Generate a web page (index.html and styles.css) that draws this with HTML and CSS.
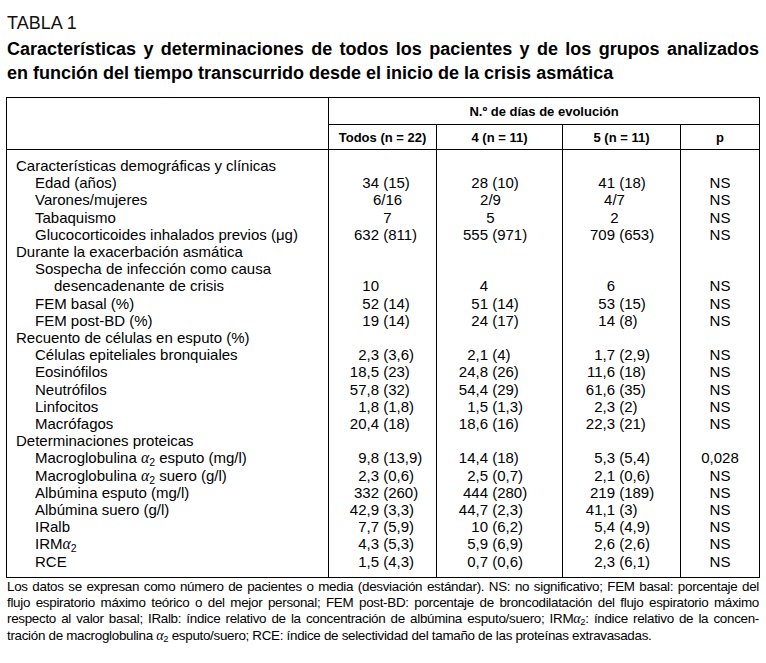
FILE: index.html
```html
<!DOCTYPE html>
<html lang="es">
<head>
<meta charset="utf-8">
<title>Tabla 1</title>
<link rel="stylesheet" href="styles.css">
</head>
<body>
<div class="page">
  <div class="tag">TABLA 1</div>
  <h1 class="title">
    <span class="tline just">Características y determinaciones de todos los pacientes y de los grupos analizados</span>
    <span class="tline">en función del tiempo transcurrido desde el inicio de la crisis asmática</span>
  </h1>
  <table class="data">
    <colgroup>
      <col class="c-label"><col class="c-all"><col class="c-four"><col class="c-five"><col class="c-p">
    </colgroup>
    <thead>
      <tr class="h1">
        <th rowspan="2" class="blank"></th>
        <th colspan="4">N.º de días de evolución</th>
      </tr>
      <tr class="h2">
        <th>Todos (n = 22)</th>
        <th>4 (n = 11)</th>
        <th>5 (n = 11)</th>
        <th>p</th>
      </tr>
    </thead>
    <tbody>
      <tr class="first"><td class="l0">Características demográficas y clínicas</td><td></td><td></td><td></td><td></td></tr>
      <tr><td class="l1">Edad (años)</td><td><span class="n">34</span> (15)</td><td><span class="n">28</span> (10)</td><td><span class="n">41</span> (18)</td><td class="p">NS</td></tr>
      <tr><td class="l1">Varones/mujeres</td><td class="c">6/16</td><td class="c">2/9</td><td class="c">4/7</td><td class="p">NS</td></tr>
      <tr><td class="l1">Tabaquismo</td><td class="c">7</td><td class="c">5</td><td class="c">2</td><td class="p">NS</td></tr>
      <tr><td class="l1">Glucocorticoides inhalados previos (μg)</td><td><span class="n">632</span> (811)</td><td><span class="n">555</span> (971)</td><td><span class="n">709</span> (653)</td><td class="p">NS</td></tr>
      <tr><td class="l0">Durante la exacerbación asmática</td><td></td><td></td><td></td><td></td></tr>
      <tr><td class="l1">Sospecha de infección como causa</td><td></td><td></td><td></td><td></td></tr>
      <tr><td class="l2">desencadenante de crisis</td><td><span class="n">10</span></td><td><span class="n">4</span></td><td><span class="n">6</span></td><td class="p">NS</td></tr>
      <tr><td class="l1">FEM basal (%)</td><td><span class="n">52</span> (14)</td><td><span class="n">51</span> (14)</td><td><span class="n">53</span> (15)</td><td class="p">NS</td></tr>
      <tr><td class="l1">FEM post-BD (%)</td><td><span class="n">19</span> (14)</td><td><span class="n">24</span> (17)</td><td><span class="n">14</span> (8)</td><td class="p">NS</td></tr>
      <tr><td class="l0">Recuento de células en esputo (%)</td><td></td><td></td><td></td><td></td></tr>
      <tr><td class="l1">Células epiteliales bronquiales</td><td><span class="n">2,3</span> (3,6)</td><td><span class="n">2,1</span> (4)</td><td><span class="n">1,7</span> (2,9)</td><td class="p">NS</td></tr>
      <tr><td class="l1">Eosinófilos</td><td><span class="n">18,5</span> (23)</td><td><span class="n">24,8</span> (26)</td><td><span class="n">11,6</span> (18)</td><td class="p">NS</td></tr>
      <tr><td class="l1">Neutrófilos</td><td><span class="n">57,8</span> (32)</td><td><span class="n">54,4</span> (29)</td><td><span class="n">61,6</span> (35)</td><td class="p">NS</td></tr>
      <tr><td class="l1">Linfocitos</td><td><span class="n">1,8</span> (1,8)</td><td><span class="n">1,5</span> (1,3)</td><td><span class="n">2,3</span> (2)</td><td class="p">NS</td></tr>
      <tr><td class="l1">Macrófagos</td><td><span class="n">20,4</span> (18)</td><td><span class="n">18,6</span> (16)</td><td><span class="n">22,3</span> (21)</td><td class="p">NS</td></tr>
      <tr><td class="l0">Determinaciones proteicas</td><td></td><td></td><td></td><td></td></tr>
      <tr><td class="l1">Macroglobulina <i class="gk">α</i><sub>2</sub> esputo (mg/l)</td><td><span class="n">9,8</span> (13,9)</td><td><span class="n">14,4</span> (18)</td><td><span class="n">5,3</span> (5,4)</td><td class="p">0,028</td></tr>
      <tr><td class="l1">Macroglobulina <i class="gk">α</i><sub>2</sub> suero (g/l)</td><td><span class="n">2,3</span> (0,6)</td><td><span class="n">2,5</span> (0,7)</td><td><span class="n">2,1</span> (0,6)</td><td class="p">NS</td></tr>
      <tr><td class="l1">Albúmina esputo (mg/l)</td><td><span class="n">332</span> (260)</td><td><span class="n">444</span> (280)</td><td><span class="n">219</span> (189)</td><td class="p">NS</td></tr>
      <tr><td class="l1">Albúmina suero (g/l)</td><td><span class="n">42,9</span> (3,3)</td><td><span class="n">44,7</span> (2,3)</td><td><span class="n">41,1</span> (3)</td><td class="p">NS</td></tr>
      <tr><td class="l1">IRalb</td><td><span class="n">7,7</span> (5,9)</td><td><span class="n">10</span> (6,2)</td><td><span class="n">5,4</span> (4,9)</td><td class="p">NS</td></tr>
      <tr><td class="l1">IRM<i class="gk">α</i><sub>2</sub></td><td><span class="n">4,3</span> (5,3)</td><td><span class="n">5,9</span> (6,9)</td><td><span class="n">2,6</span> (2,6)</td><td class="p">NS</td></tr>
      <tr class="last"><td class="l1">RCE</td><td><span class="n">1,5</span> (4,3)</td><td><span class="n">0,7</span> (0,6)</td><td><span class="n">2,3</span> (6,1)</td><td class="p">NS</td></tr>
    </tbody>
  </table>
  <div class="notes">
    <div class="nline just">Los datos se expresan como número de pacientes o media (desviación estándar). NS: no significativo; FEM basal: porcentaje del</div>
    <div class="nline just">flujo espiratorio máximo teórico o del mejor personal; FEM post-BD: porcentaje de broncodilatación del flujo espiratorio máximo</div>
    <div class="nline just">respecto al valor basal; IRalb: índice relativo de la concentración de albúmina esputo/suero; IRM<i class="gk">α</i><sub>2</sub>: índice relativo de la concen-</div>
    <div class="nline">tración de macroglobulina <i class="gk">α</i><sub>2</sub> esputo/suero; RCE: índice de selectividad del tamaño de las proteínas extravasadas.</div>
  </div>
</div>
</body>
</html>
```

FILE: styles.css
```css
html, body {
  margin: 0;
  padding: 0;
  background: #ffffff;
  color: #000000;
}

body {
  font-family: "Liberation Sans", Arial, sans-serif;
}

.page {
  width: 753px;
  padding: 12px 0 0 6px;
}

.tag {
  font-size: 18px;
  line-height: 22px;
  padding-left: 1px;
  font-weight: normal;
  color: #111;
}

.title {
  margin: 3px 0 0 0;
  padding-left: 1px;
  font-size: 18px;
  line-height: 24px;
  font-weight: bold;
}

.tline {
  display: block;
  white-space: nowrap;
}

.just {
  text-align: justify;
  text-align-last: justify;
}

.data {
  margin-top: 12px;
  width: 753px;
  table-layout: fixed;
  border-collapse: collapse;
  border: 1px solid #000;
  font-size: 15px;
}

.c-label { width: 322px; }
.c-all { width: 108px; }
.c-four { width: 126px; }
.c-five { width: 118px; }
.c-p { width: 79px; }

.data th {
  font-size: 13px;
  font-weight: bold;
  padding: 0;
  text-align: center;
  border: 1px solid #000;
}

.data th.blank {
  border-top: 0;
  border-bottom: 1px solid #000;
}

.h1 th { height: 26px; }
.h2 th { height: 24px; }

.data td {
  padding: 0;
  line-height: 17.2px;
  height: 17.2px;
  white-space: nowrap;
  border-left: 1px solid #000;
  border-right: 1px solid #000;
  vertical-align: top;
}

.data tbody td:nth-child(2) { padding-left: 10px; }
.data tbody td:nth-child(3) { padding-left: 11px; }
.data tbody td:nth-child(4) { padding-left: 12px; }

.data tr.first td { padding-top: 7px; }
.data tr.last td { padding-bottom: 7px; }

.l0 { padding-left: 9px !important; }
.l1 { padding-left: 28px !important; }
.l2 { padding-left: 47px !important; }

.n {
  display: inline-block;
  width: 40px;
  text-align: right;
}

.data td.c {
  text-align: center;
  padding-left: 0;
}
.data tbody td.c:nth-child(3) { padding-left: 0; padding-right: 18px; }
.data tbody td.c:nth-child(4) { padding-left: 0; padding-right: 14px; }

.data td.p {
  text-align: center;
}

.gk {
  font-family: "Liberation Serif", "DejaVu Serif", serif;
  font-style: italic;
  line-height: 0;
  font-size: 1.05em;
}

sub {
  font-size: 0.7em;
  line-height: 0;
  vertical-align: -0.25em;
}

.notes {
  margin-top: 1px;
  padding-left: 1px;
  font-size: 13.4px;
  line-height: 16.3px;
  letter-spacing: -0.3px;
}

.nline {
  white-space: nowrap;
}
```
